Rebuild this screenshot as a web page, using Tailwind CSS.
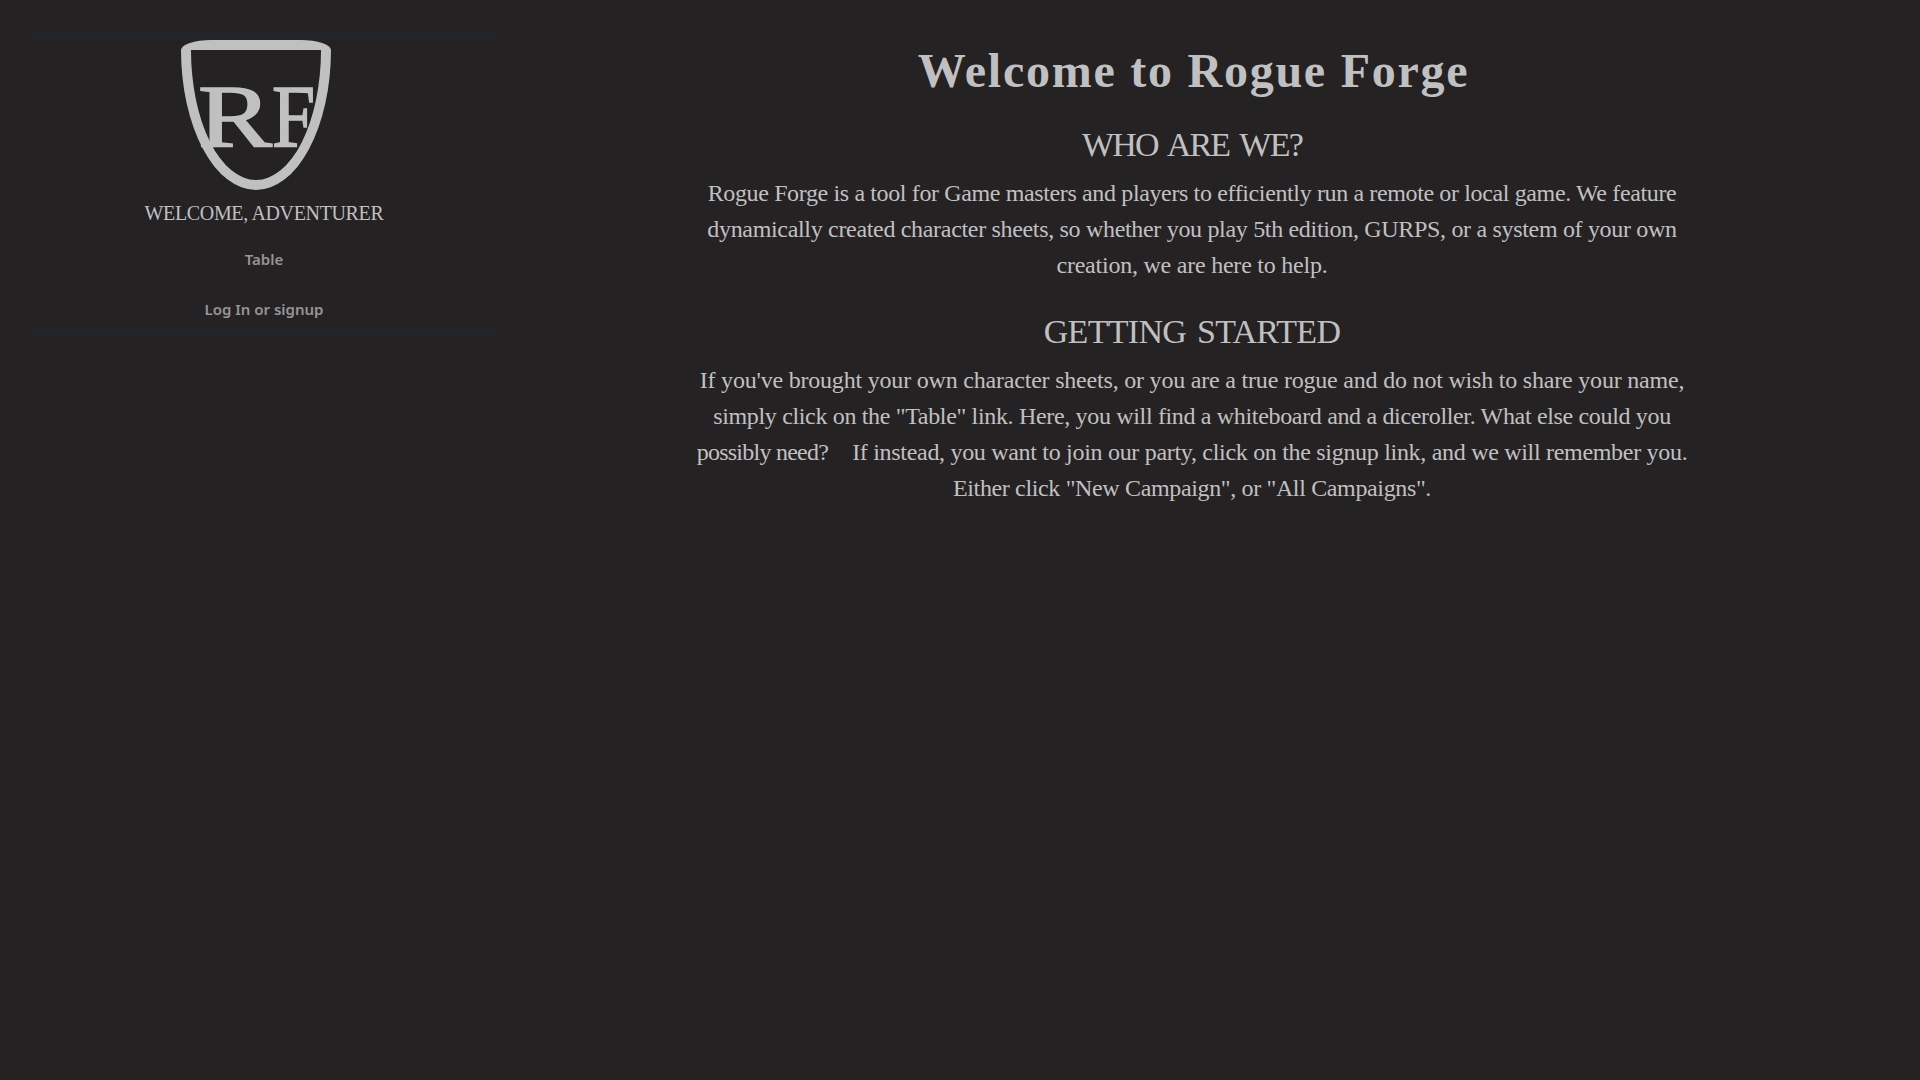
<!DOCTYPE html>
<html lang="en">
<head>
<meta charset="utf-8">
<title>Rogue Forge</title>
<script src="https://cdn.jsdelivr.net/npm/@tailwindcss/browser@4"></script>
</head>
<body class="min-h-screen overflow-hidden bg-[#242223] text-[#c0c0c0] font-['Liberation_Serif',serif]">
<div class="flex">
  <aside class="ml-8 mt-8 flex h-[305px] w-[464px] shrink-0 flex-col items-center border-y-8 border-[#212529]">
    <svg class="mr-4 h-[150px] w-[150px] shrink-0" viewBox="0 0 150 150" role="img" aria-label="Rogue Forge">
      <path fill="#c0c0c0" fill-rule="evenodd" d="M30 0H120A30 10 0 0 1 150 10A75 140 0 0 1 75 150A75 140 0 0 1 0 10A30 10 0 0 1 30 0ZM10 10A65 130 0 0 0 75 140A65 130 0 0 0 140 10Z"/>
      <g fill="#c0c0c0" stroke="#c0c0c0" stroke-width="1.600" font-family="'Liberation Serif', serif" font-size="89">
        <text x="17" y="105.500" textLength="74" lengthAdjust="spacingAndGlyphs">R</text>
        <text x="91" y="105.500" textLength="43" lengthAdjust="spacingAndGlyphs">F</text>
      </g>
    </svg>
    <p class="mt-[11px] whitespace-nowrap text-[20px] leading-6 tracking-[-0.35px]">WELCOME, ADVENTURER</p>
    <nav class="mt-[9px] flex flex-col items-center text-[15px] font-semibold text-[#959595] font-['Noto_Sans',sans-serif]">
      <a class="flex h-[50px] items-center">Table</a>
      <a class="flex h-[50px] items-center">Log In or signup</a>
    </nav>
  </aside>
  <main class="mr-8 flex-1 pt-[42px] text-center whitespace-nowrap">
    <h1 class="pl-[3px] text-[48px] font-bold leading-[58px] tracking-[1.75px]">Welcome to Rogue Forge</h1>
    <h2 class="mt-6 text-[34px] uppercase leading-[41px] tracking-[-1.8px] [word-spacing:4px]">Who Are We?</h2>
    <p class="mt-2.5 text-[24px] leading-9">
      <span class="block tracking-[-0.37px]">Rogue Forge is a tool for Game masters and players to efficiently run a remote or local game. We feature</span>
      <span class="block tracking-[-0.32px]">dynamically created character sheets, so whether you play 5th edition, GURPS, or a system of your own</span>
      <span class="block tracking-[-0.23px]">creation, we are here to help.</span>
    </p>
    <h2 class="mt-7 text-[34px] uppercase leading-[41px] tracking-[-0.7px] [word-spacing:3px]">Getting Started</h2>
    <p class="mt-2.5 text-[24px] leading-9">
      <span class="block tracking-[-0.2px]">If you've brought your own character sheets, or you are a true rogue and do not wish to share your name,</span>
      <span class="block tracking-[-0.335px]">simply click on the "Table" link. Here, you will find a whiteboard and a diceroller. What else could you</span>
      <span class="flex justify-center gap-6"><span class="tracking-[-0.75px]">possibly need?</span><span class="tracking-[-0.305px]">If instead, you want to join our party, click on the signup link, and we will remember you.</span></span>
      <span class="block tracking-[-0.355px]">Either click "New Campaign", or "All Campaigns".</span>
    </p>
  </main>
</div>
</body>
</html>
